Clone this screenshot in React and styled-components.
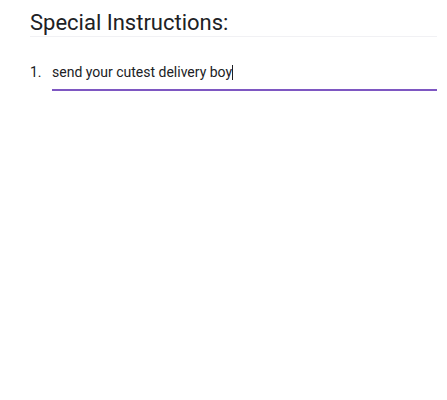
import styled, { createGlobalStyle } from "styled-components"

const GlobalStyle = createGlobalStyle`
  html, body {
    margin:0;
    padding:0;
    background:#ffffff;
  }
  body {
    font-family: Roboto, "Noto Sans", Arial, sans-serif;
    color:#202124;
  }
`;
const Page = styled.main`
  width:447px;
  height:400px;
  padding:0 10px 0 30px;
  box-sizing:border-box;
`;
const TitleBox = styled.header`
  border-bottom:1px solid #f1f1f4;
  padding:10px 0 0;
`;
const Title = styled.h1`
  margin:0;
  font-size:22px;
  font-weight:400;
  line-height:26px;
  color:#202124;
`;
const List = styled.ol`
  list-style:none;
  margin:0;
  padding:25px 0 0;
`;
const Item = styled.li`
  display:flex;
  align-items:flex-start;
`;
const Num = styled.span`
  width:22px;
  font-size:14px;
  line-height:20px;
  color:#202124;
`;
const Field = styled.div`
  flex:1;
  font-size:14px;
  line-height:20px;
  padding-bottom:7px;
  border-bottom:2px solid #7e57c2;
  color:#202124;
`;
const Caret = styled.span`
  display:inline-block;
  width:1px;
  height:15px;
  background:#202124;
  vertical-align:-3px;
`;

export default function App(){
  return(
    <>
    <GlobalStyle />
    <Page>
      <TitleBox>
        <Title>Special Instructions:</Title>
      </TitleBox>
      <List>
        <Item>
          <Num>1.</Num>
          <Field>send your cutest delivery boy<Caret /></Field>
        </Item>
      </List>
    </Page>
    </>
  )
}
